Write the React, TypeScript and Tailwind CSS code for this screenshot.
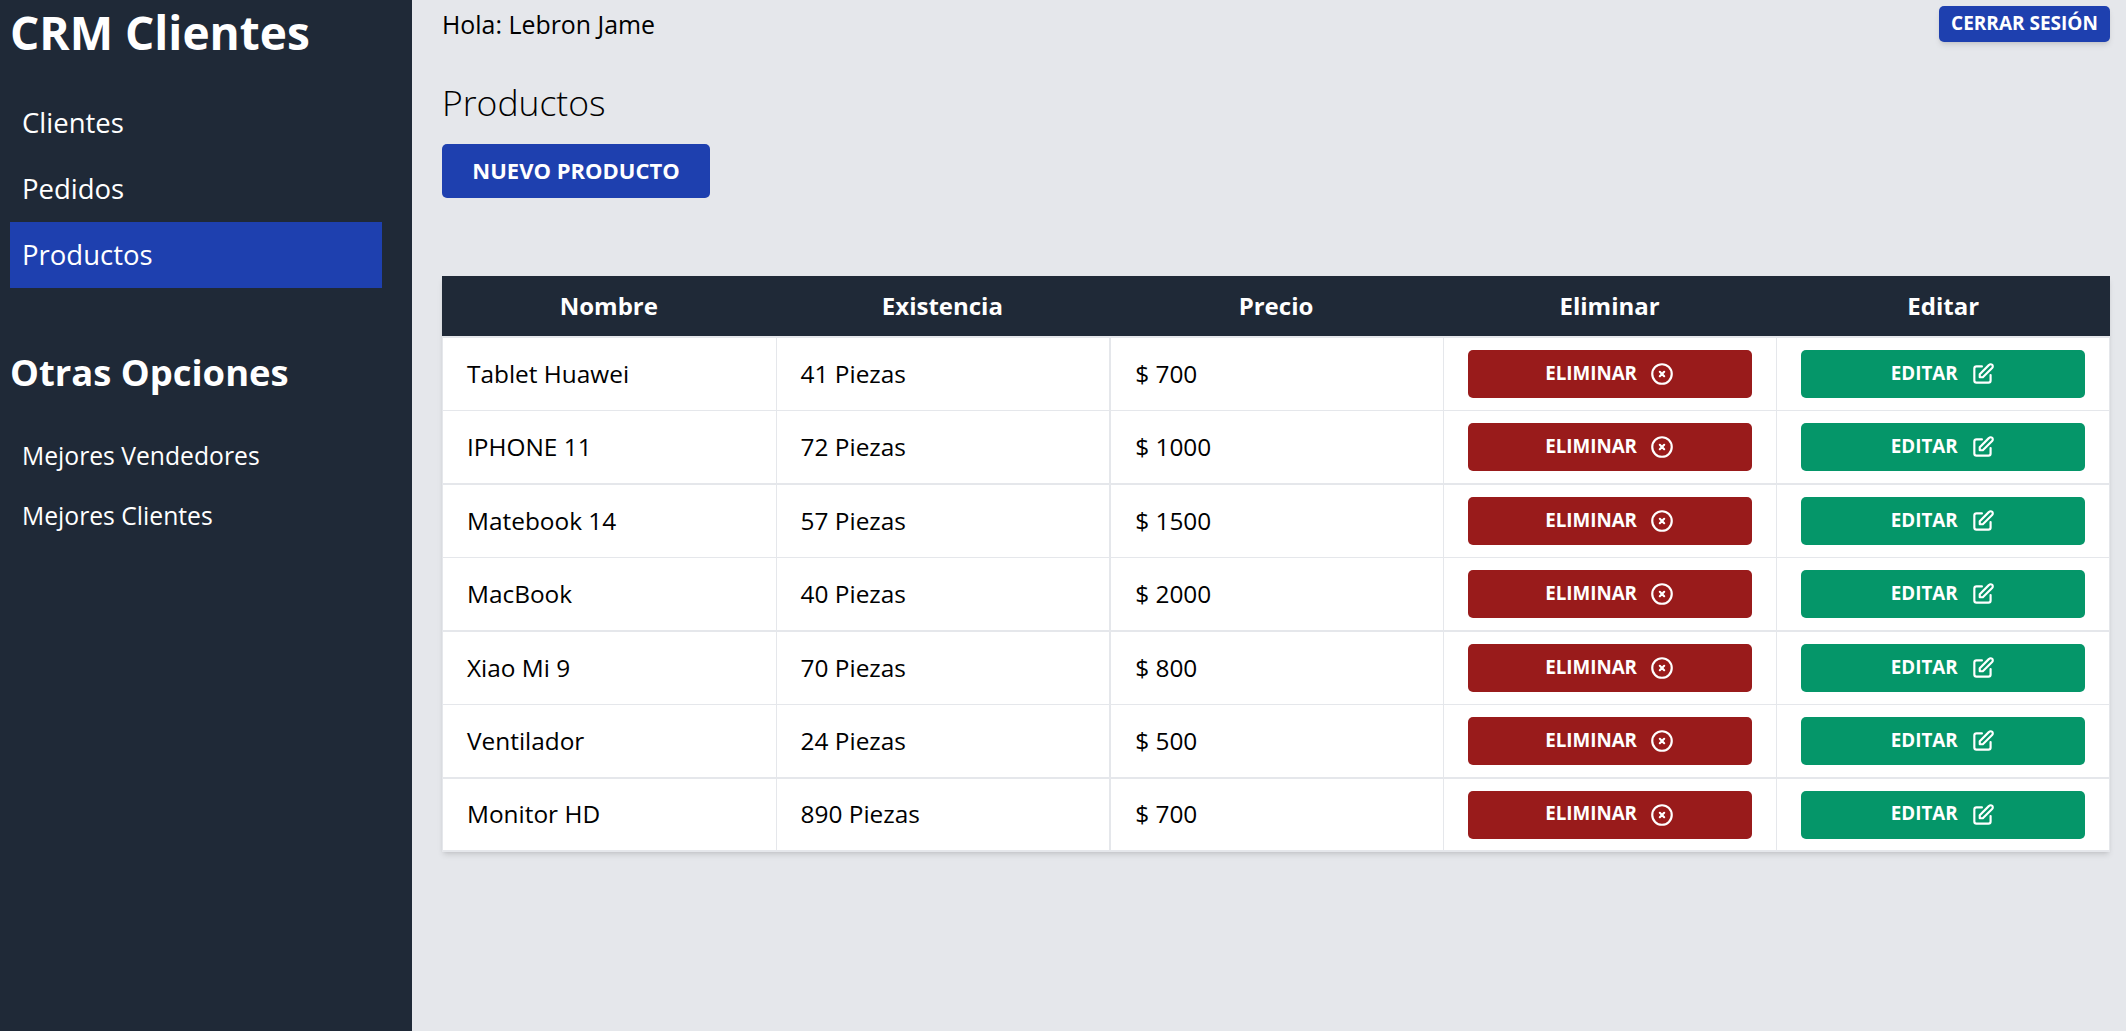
const font = { fontFamily: '"Open Sans", "Noto Sans", sans-serif' };

const rows = [
  { n: "Tablet Huawei", e: "41 Piezas", p: "$ 700", b: "border-b", h: "h-[75px]" },
  { n: "IPHONE 11", e: "72 Piezas", p: "$ 1000", b: "border-b-2", h: "h-[74px]" },
  { n: "Matebook 14", e: "57 Piezas", p: "$ 1500", b: "border-b", h: "h-[73px]" },
  { n: "MacBook", e: "40 Piezas", p: "$ 2000", b: "border-b-2", h: "h-[74px]" },
  { n: "Xiao Mi 9", e: "70 Piezas", p: "$ 800", b: "border-b", h: "h-[73px]" },
  { n: "Ventilador", e: "24 Piezas", p: "$ 500", b: "border-b-2", h: "h-[74px]" },
  { n: "Monitor HD", e: "890 Piezas", p: "$ 700", b: "border-b-2", h: "h-[73px]" },
];

function XIcon() {
  return (
    <svg className="h-[26px] w-[26px]" fill="none" viewBox="0 0 24 24" stroke="currentColor" strokeWidth={2} strokeLinecap="round" strokeLinejoin="round">
      <path d="M10 14l2-2m0 0l2-2m-2 2l-2-2m2 2l2 2m7-2a9 9 0 11-18 0 9 9 0 0118 0z" />
    </svg>
  );
}

function EditIcon() {
  return (
    <svg className="h-[26px] w-[26px]" fill="none" viewBox="0 0 24 24" stroke="currentColor" strokeWidth={2} strokeLinecap="round" strokeLinejoin="round">
      <path d="M11 5H6a2 2 0 00-2 2v11a2 2 0 002 2h11a2 2 0 002-2v-5m-1.414-9.414a2 2 0 112.828 2.828L11.828 15H9v-2.828l8.586-8.586z" />
    </svg>
  );
}

export default function App() {
  return (
    <div className="flex min-h-screen bg-[#e5e7eb] text-black" style={font}>
      <aside className="w-[412px] shrink-0 bg-[#1f2937] px-[10px] text-white">
        <h1 className="pt-[6px] pb-[1px] text-[46px] leading-[52px] font-bold">CRM Clientes</h1>
        <nav className="mt-[31px]">
          <a className="flex h-[66px] w-[372px] items-center px-[12px] text-[27.5px]">Clientes</a>
          <a className="flex h-[66px] w-[372px] items-center px-[12px] text-[27.5px]">Pedidos</a>
          <a className="flex h-[66px] w-[372px] items-center bg-[#1e40af] px-[12px] text-[27.5px]">Productos</a>
        </nav>
        <h2 className="mt-[61px] text-[36.4px] leading-[46px] font-bold">Otras Opciones</h2>
        <nav className="mt-[31px]">
          <a className="flex h-[60px] items-center px-[12px] text-[24.7px]">Mejores Vendedores</a>
          <a className="flex h-[60px] items-center px-[12px] text-[24.7px]">Mejores Clientes</a>
        </nav>
      </aside>
      <main className="min-w-0 flex-1 pr-[16px] pl-[30px]">
        <div className="flex items-start justify-between pt-[6px]">
          <p className="text-[24.9px] leading-[36px]">Hola: Lebron Jame</p>
          <button className="flex h-[36px] w-[171px] items-center justify-center rounded-[5px] bg-[#1e40af] pb-[2px] text-[19px] font-bold text-white shadow-md">CERRAR SESIÓN</button>
        </div>
        <h2 className="mt-[35px] text-[35.5px] leading-[50px] font-light">Productos</h2>
        <button className="mt-[17px] flex h-[54px] w-[268px] items-center justify-center rounded-[5px] bg-[#1e40af] pb-[2px] text-[22px] font-bold text-white">NUEVO PRODUCTO</button>
        <table className="mt-[78px] w-full table-fixed border-separate border-spacing-0 bg-white shadow-md">
          <thead>
            <tr className="bg-[#1f2937] text-white">
              {["Nombre", "Existencia", "Precio", "Eliminar", "Editar"].map((h) => (
                <th key={h} className="h-[60px] p-0 text-center text-[24px] font-bold">{h}</th>
              ))}
            </tr>
          </thead>
          <tbody>
            {rows.map((r, i) => (
              <tr key={r.n}>
                <td className={`border-l px-[24px] text-[24.4px] border-[#e5e7eb] ${r.b} ${i === 0 ? "border-t-2" : ""} ${r.h}`}>{r.n}</td>
                <td className={`border-l px-[24px] text-[24.4px] border-[#e5e7eb] ${r.b} ${i === 0 ? "border-t-2" : ""}`}>{r.e}</td>
                <td className={`border-l-2 px-[24px] text-[24.4px] border-[#e5e7eb] ${r.b} ${i === 0 ? "border-t-2" : ""}`}>{r.p}</td>
                <td className={`border-l px-[24px] border-[#e5e7eb] ${r.b} ${i === 0 ? "border-t-2" : ""}`}>
                  <button className="flex h-[48px] w-full items-center justify-center gap-[12px] rounded-[5px] bg-[#991b1b] text-[18.8px] font-bold text-white"><span className="pb-[2px]">ELIMINAR</span> <XIcon /></button>
                </td>
                <td className={`border-l border-r px-[24px] border-[#e5e7eb] ${r.b} ${i === 0 ? "border-t-2" : ""}`}>
                  <button className="flex h-[48px] w-full items-center justify-center gap-[12px] rounded-[5px] bg-[#059669] text-[18.8px] font-bold text-white"><span className="pb-[2px]">EDITAR</span> <EditIcon /></button>
                </td>
              </tr>
            ))}
          </tbody>
        </table>
      </main>
    </div>
  );
}
